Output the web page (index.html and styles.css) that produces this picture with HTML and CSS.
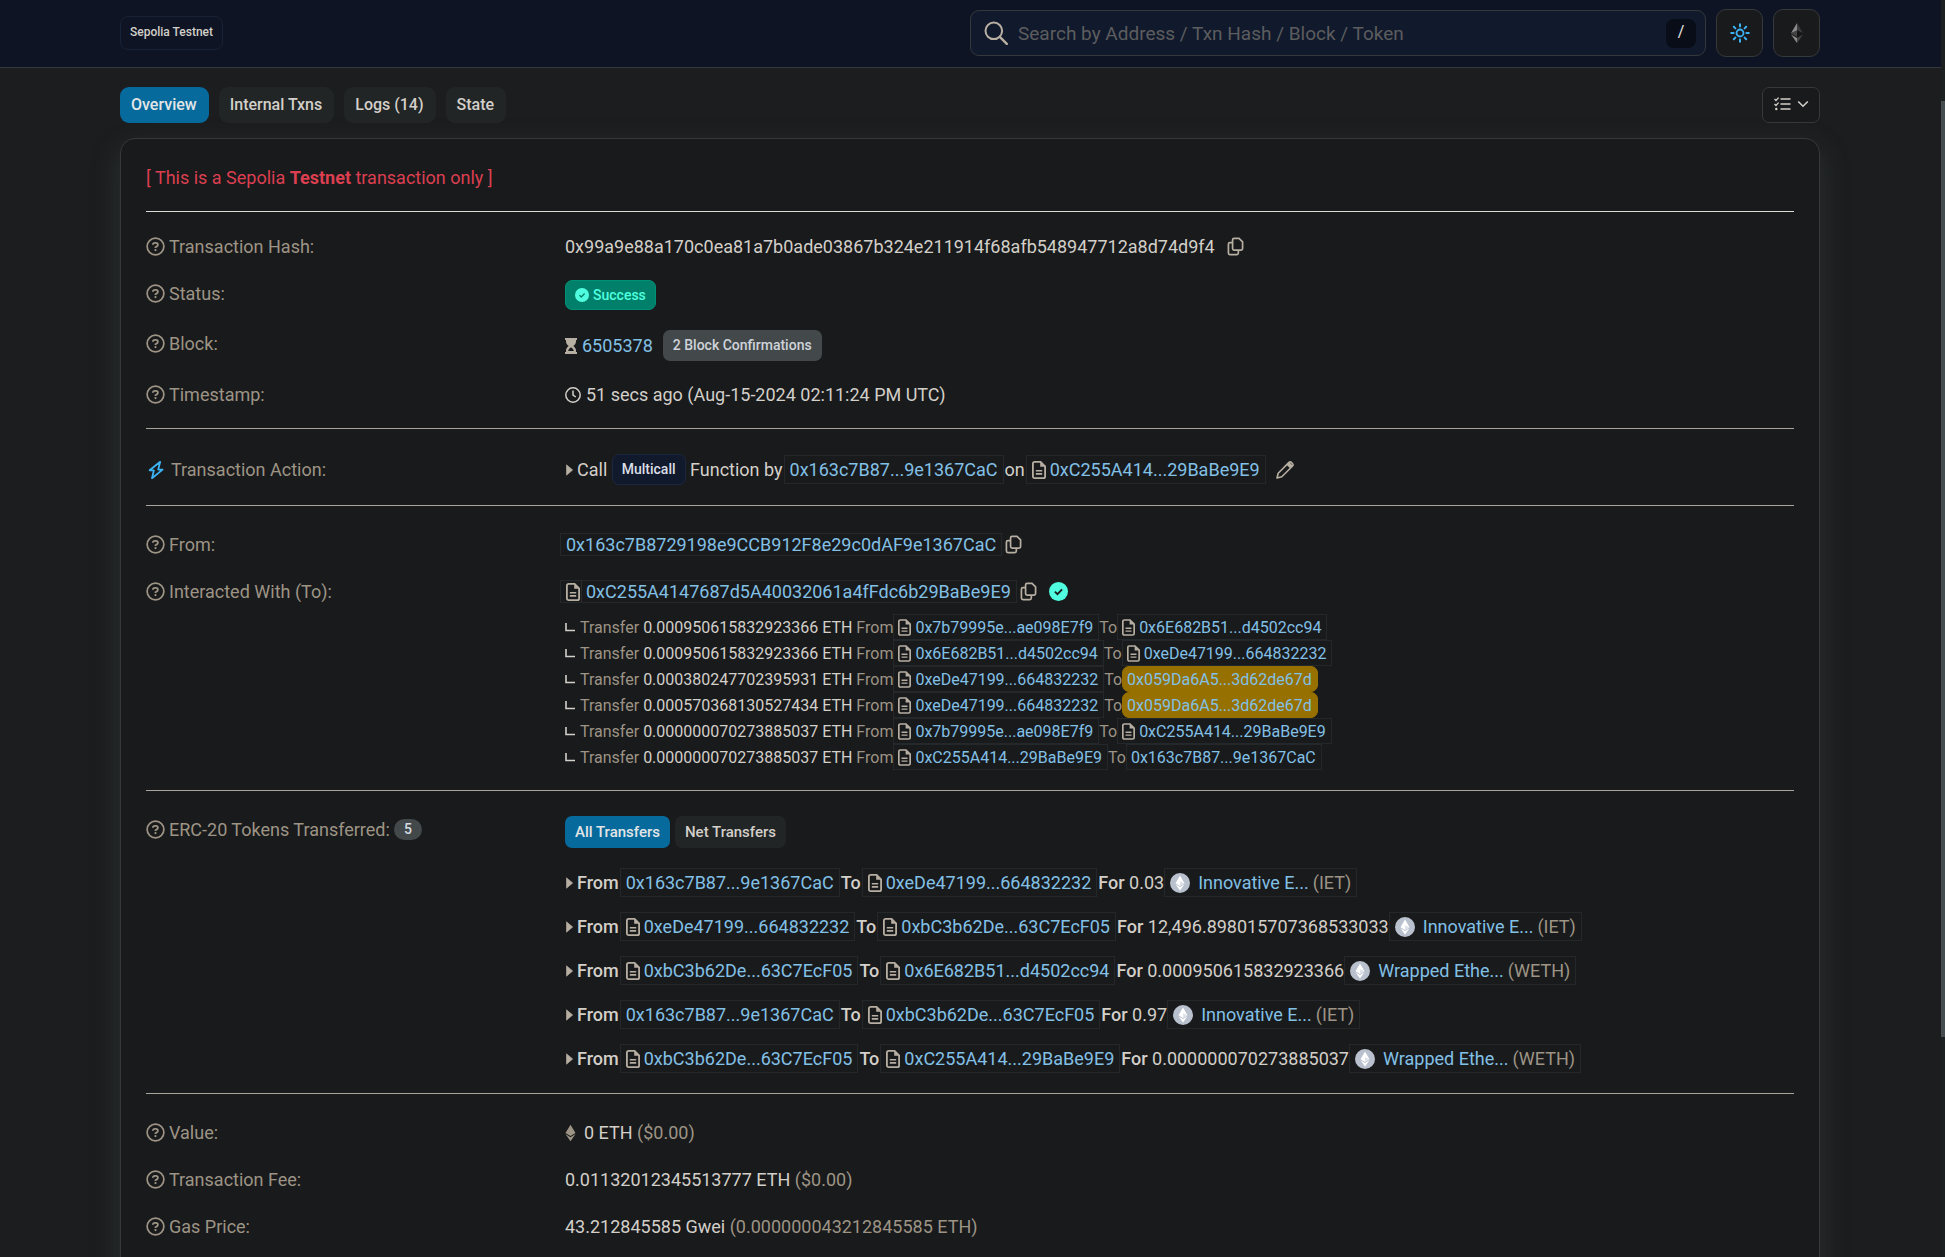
FILE: index.html
```
<!DOCTYPE html>
<html lang="en">
<head>
  <meta charset="UTF-8" />
  <meta name="viewport" content="width=device-width, initial-scale=1.0"/>
  <title>Sepolia Transaction Hash: 0x99a9e88a17...</title>
  <link rel="stylesheet" href="styles.css">
</head>
<body>
  <svg class="sprite" aria-hidden="true">
    <symbol id="i-help" viewBox="0 0 20 20"><circle cx="10" cy="10" r="8.8" fill="none" stroke="currentColor" stroke-width="1.8"/><path d="M7.2 8.2c.1-1.300 1-2 2.300-2h.8c1.300 0 2.200.8 2.200 1.900 0 .9-.5 1.400-1.200 1.800l-1.300.8v.8" fill="none" stroke="currentColor" stroke-width="1.900"/><circle cx="10" cy="13.800" r="1.200" fill="currentColor"/></symbol>
    <symbol id="i-copy" viewBox="0 0 18 20"><path d="M7.500 1.500h5.200L16.500 5v7.200a1.600 1.600 0 0 1-1.600 1.600H7.500a1.600 1.600 0 0 1-1.600-1.600V3.100a1.600 1.600 0 0 1 1.600-1.600zM5.900 6H3.100a1.600 1.600 0 0 0-1.600 1.600v9.300a1.600 1.600 0 0 0 1.600 1.600h7.300a1.600 1.600 0 0 0 1.600-1.600v-3.100" fill="none" stroke="currentColor" stroke-width="1.800"/></symbol>
    <symbol id="i-file" viewBox="0 0 14 18"><path d="M2.600.9h6l4.500 4.500v10a1.700 1.700 0 0 1-1.700 1.700H2.600A1.700 1.700 0 0 1 .9 15.400V2.600A1.700 1.700 0 0 1 2.600.9z" fill="none" stroke="currentColor" stroke-width="1.800"/><path d="M8.200.9v4.900h4.900z" fill="currentColor"/><path d="M3.800 9.800h6.400M3.800 12.900h6.400" stroke="currentColor" stroke-width="1.600"/></symbol>
    <symbol id="i-check" viewBox="0 0 18 18"><circle cx="9" cy="9" r="9" fill="currentColor"/><path d="M5.600 9.200l2.400 2.400 4.400-4.500" fill="none" stroke="var(--tick)" stroke-width="1.700"/></symbol>
    <symbol id="i-hourglass" viewBox="0 0 12 16"><path d="M0 0h12v2h-1v1.500C11 5.500 9.500 7 8.300 8c1.200 1 2.700 2.500 2.700 4.500V14h1v2H0v-2h1v-1.500C1 10.500 2.500 9 3.700 8 2.500 7 1 5.500 1 3.500V2H0zM6 9.200c-1.200.9-2.500 2-2.800 3.800h5.600C8.500 11.200 7.200 10.100 6 9.200z" fill="currentColor" fill-rule="evenodd"/></symbol>
    <symbol id="i-clock" viewBox="0 0 16 16"><circle cx="8" cy="8" r="7.200" fill="none" stroke="currentColor" stroke-width="1.500"/><path d="M8 3.600V8l2.800 2" fill="none" stroke="currentColor" stroke-width="1.500"/></symbol>
    <symbol id="i-bolt" viewBox="0 0 16 20"><path d="M12.200 1.800L1.600 10.300h4.300L4 18.200 14.600 9.600h-4.400z" fill="none" stroke="currentColor" stroke-width="1.800" stroke-linejoin="round"/></symbol>
    <symbol id="i-caret" viewBox="0 0 7 12"><path d="M.5.800v10.400L6.700 6z" fill="currentColor" stroke="currentColor" stroke-width=".6"/></symbol>
    <symbol id="i-pencil" viewBox="0 0 20 20"><path d="M2 18l1.200-4.800L14 2.400a1.600 1.600 0 0 1 2.300 0l1.300 1.300a1.600 1.600 0 0 1 0 2.300L6.800 16.800z" fill="none" stroke="currentColor" stroke-width="1.600" stroke-linejoin="round"/><path d="M11.500 4.800L15 8.300l2.800-2.600-3.500-3.600z" fill="currentColor"/></symbol>
    <symbol id="i-search" viewBox="0 0 24 24"><circle cx="9.800" cy="9.800" r="8.300" fill="none" stroke="currentColor" stroke-width="2"/><path d="M15.800 15.800l7 7" stroke="currentColor" stroke-width="2.400" stroke-linecap="round"/></symbol>
    <symbol id="i-sun" viewBox="0 0 20 20"><circle cx="10" cy="10" r="3.500" fill="none" stroke="currentColor" stroke-width="1.800"/><path d="M10 1.200v2.400M10 16.400v2.400M1.200 10h2.400M16.400 10h2.400M3.800 3.800l1.600 1.600M14.600 14.600l1.600 1.600M16.200 3.800l-1.600 1.600M5.400 14.600l-1.600 1.600" stroke="currentColor" stroke-width="2" stroke-linecap="round"/></symbol>
    <symbol id="i-eth-color" viewBox="0 0 12 20"><path d="M6 0L0 10.300 6 7.600z" fill="#8a8a8a"/><path d="M6 0l6 10.300-6-2.700z" fill="#3b3b3b"/><path d="M0 10.300l6-2.700v6.200z" fill="#454545"/><path d="M12 10.300L6 7.600v6.200z" fill="#161616"/><path d="M0 11.600l6 3.500V20z" fill="#8a8a8a"/><path d="M12 11.600l-6 3.500V20z" fill="#444"/></symbol>
    <symbol id="i-eth" viewBox="0 0 12 18"><path d="M6 0l5.500 9L6 12.200.5 9zM.5 10.200L6 13.500l5.500-3.300L6 18z" fill="currentColor"/></symbol>
    <symbol id="i-token" viewBox="0 0 20 20"><circle cx="10" cy="10" r="10" fill="#b9c0ce"/><path d="M10 2.500l4.500 7.700-4.500 2.700-4.500-2.700zM5.500 11.200l4.500 2.700 4.500-2.700-4.500 6.300z" fill="#fff"/><path d="M10 8.200l4.500 2-4.500 2.700z" fill="#dfe3ea"/></symbol>
    <symbol id="i-list" viewBox="0 0 17 14"><path d="M6.500 2H16.500M6.500 7H16.500M6.500 12H16.500" stroke="currentColor" stroke-width="1.600"/><path d="M.5 2l1.500 1.500L4.600.6M.5 7l1.500 1.500L4.600 5.600" fill="none" stroke="currentColor" stroke-width="1.300"/><circle cx="2.300" cy="12" r="1.200" fill="currentColor"/></symbol>
    <symbol id="i-chevron" viewBox="0 0 12 8"><path d="M1.200 1.500L6 6.200l4.800-4.700" fill="none" stroke="currentColor" stroke-width="1.600"/></symbol>
    <symbol id="i-corner" viewBox="0 0 10 10"><path d="M1 1v7.500h9" fill="none" stroke="currentColor" stroke-width="1.600"/></symbol>
  </svg>

  <header class="header">
    <div class="container header-inner">
      <span class="network">Sepolia Testnet</span>
      <div class="header-tools">
        <form class="search">
          <svg class="icon search-icon"><use href="#i-search"/></svg>
          <input type="text" aria-label="Search" placeholder="Search by Address / Txn Hash / Block / Token">
          <kbd>/</kbd>
        </form>
        <button class="square blue" aria-label="Theme"><svg class="icon help"><use href="#i-sun"/></svg></button>
        <button class="square" aria-label="Networks"><svg class="icon eth-logo"><use href="#i-eth-color"/></svg></button>
      </div>
    </div>
  </header>

  <main class="container">
    <nav class="tabs">
      <button class="tab active">Overview</button>
      <button class="tab">Internal Txns</button>
      <button class="tab">Logs (14)</button>
      <button class="tab">State</button>
      <button class="options" aria-label="Options"><svg class="icon list"><use href="#i-list"/></svg><svg class="icon chevron"><use href="#i-chevron"/></svg></button>
    </nav>

    <div class="card">
      <p class="warning">[ This is a Sepolia <b>Testnet</b> transaction only ]</p>

      <section class="section first">
        <div class="row">
          <div class="label"><svg class="icon help"><use href="#i-help"/></svg>Transaction Hash:</div>
          <div class="value">0x99a9e88a170c0ea81a7b0ade03867b324e211914f68afb548947712a8d74d9f4 <button class="plain wide" aria-label="Copy hash"><svg class="icon copy"><use href="#i-copy"/></svg></button></div>
        </div>
        <div class="row">
          <div class="label"><svg class="icon help"><use href="#i-help"/></svg>Status:</div>
          <div class="value"><span class="badge success"><svg class="icon check-sm"><use href="#i-check"/></svg>Success</span></div>
        </div>
        <div class="row">
          <div class="label"><svg class="icon help"><use href="#i-help"/></svg>Block:</div>
          <div class="value"><svg class="icon hourglass"><use href="#i-hourglass"/></svg><a href="#">6505378</a><span class="badge confirmations">2 Block Confirmations</span></div>
        </div>
        <div class="row">
          <div class="label"><svg class="icon help"><use href="#i-help"/></svg>Timestamp:</div>
          <div class="value"><svg class="icon clock"><use href="#i-clock"/></svg>51 secs ago (Aug-15-2024 02:11:24 PM UTC)</div>
        </div>
      </section>

      <section class="section">
        <div class="row middle">
          <div class="label action"><svg class="icon bolt"><use href="#i-bolt"/></svg>Transaction Action:</div>
          <div class="value"><svg class="icon caret"><use href="#i-caret"/></svg>Call <span class="badge method">Multicall</span> Function by<span class="addr"><a href="#">0x163c7B87...9e1367CaC</a></span>on<span class="addr"><svg class="icon file"><use href="#i-file"/></svg><a href="#">0xC255A414...29BaBe9E9</a></span><button class="plain wide" aria-label="Edit note"><svg class="icon help"><use href="#i-pencil"/></svg></button></div>
        </div>
      </section>

      <section class="section">
        <div class="row">
          <div class="label"><svg class="icon help"><use href="#i-help"/></svg>From:</div>
          <div class="value"><span class="addr full"><a href="#">0x163c7B8729198e9CCB912F8e29c0dAF9e1367CaC</a></span><button class="plain" aria-label="Copy address"><svg class="icon copy"><use href="#i-copy"/></svg></button></div>
        </div>
        <div class="row">
          <div class="label"><svg class="icon help"><use href="#i-help"/></svg>Interacted With (To):</div>
          <div>
            <div class="value"><span class="addr full"><svg class="icon file"><use href="#i-file"/></svg><a href="#">0xC255A4147687d5A40032061a4fFdc6b29BaBe9E9</a></span><button class="plain" aria-label="Copy address"><svg class="icon copy"><use href="#i-copy"/></svg></button><svg class="icon verified"><use href="#i-check"/></svg></div>
            <ul class="internal">
              <li><svg class="icon corner"><use href="#i-corner"/></svg>Transfer <span class="amount">0.000950615832923366 ETH</span> From<span class="addr"><svg class="icon file"><use href="#i-file"/></svg><a href="#">0x7b79995e...ae098E7f9</a></span>To<span class="addr"><svg class="icon file"><use href="#i-file"/></svg><a href="#">0x6E682B51...d4502cc94</a></span></li>
              <li><svg class="icon corner"><use href="#i-corner"/></svg>Transfer <span class="amount">0.000950615832923366 ETH</span> From<span class="addr"><svg class="icon file"><use href="#i-file"/></svg><a href="#">0x6E682B51...d4502cc94</a></span>To<span class="addr"><svg class="icon file"><use href="#i-file"/></svg><a href="#">0xeDe47199...664832232</a></span></li>
              <li><svg class="icon corner"><use href="#i-corner"/></svg>Transfer <span class="amount">0.000380247702395931 ETH</span> From<span class="addr"><svg class="icon file"><use href="#i-file"/></svg><a href="#">0xeDe47199...664832232</a></span>To<span class="addr marked"><a href="#">0x059Da6A5...3d62de67d</a></span></li>
              <li><svg class="icon corner"><use href="#i-corner"/></svg>Transfer <span class="amount">0.000570368130527434 ETH</span> From<span class="addr"><svg class="icon file"><use href="#i-file"/></svg><a href="#">0xeDe47199...664832232</a></span>To<span class="addr marked"><a href="#">0x059Da6A5...3d62de67d</a></span></li>
              <li><svg class="icon corner"><use href="#i-corner"/></svg>Transfer <span class="amount">0.000000070273885037 ETH</span> From<span class="addr"><svg class="icon file"><use href="#i-file"/></svg><a href="#">0x7b79995e...ae098E7f9</a></span>To<span class="addr"><svg class="icon file"><use href="#i-file"/></svg><a href="#">0xC255A414...29BaBe9E9</a></span></li>
              <li><svg class="icon corner"><use href="#i-corner"/></svg>Transfer <span class="amount">0.000000070273885037 ETH</span> From<span class="addr"><svg class="icon file"><use href="#i-file"/></svg><a href="#">0xC255A414...29BaBe9E9</a></span>To<span class="addr"><a href="#">0x163c7B87...9e1367CaC</a></span></li>
            </ul>
          </div>
        </div>
      </section>

      <section class="section">
        <div class="row">
          <div class="label"><svg class="icon help"><use href="#i-help"/></svg>ERC-20 Tokens Transferred: <span class="count">5</span></div>
          <div>
            <div class="pills">
              <button class="pill active">All Transfers</button>
              <button class="pill">Net Transfers</button>
            </div>
            <ul class="tokens">
              <li><svg class="icon caret"><use href="#i-caret"/></svg><b>From</b><span class="addr"><a href="#">0x163c7B87...9e1367CaC</a></span><b>To</b><span class="addr"><svg class="icon file"><use href="#i-file"/></svg><a href="#">0xeDe47199...664832232</a></span><b>For</b>&nbsp;0.03<span class="addr token"><svg class="icon coin"><use href="#i-token"/></svg><a href="#">Innovative E...</a><span class="muted">(IET)</span></span></li>
              <li><svg class="icon caret"><use href="#i-caret"/></svg><b>From</b><span class="addr"><svg class="icon file"><use href="#i-file"/></svg><a href="#">0xeDe47199...664832232</a></span><b>To</b><span class="addr"><svg class="icon file"><use href="#i-file"/></svg><a href="#">0xbC3b62De...63C7EcF05</a></span><b>For</b>&nbsp;12,496.898015707368533033<span class="addr token"><svg class="icon coin"><use href="#i-token"/></svg><a href="#">Innovative E...</a><span class="muted">(IET)</span></span></li>
              <li><svg class="icon caret"><use href="#i-caret"/></svg><b>From</b><span class="addr"><svg class="icon file"><use href="#i-file"/></svg><a href="#">0xbC3b62De...63C7EcF05</a></span><b>To</b><span class="addr"><svg class="icon file"><use href="#i-file"/></svg><a href="#">0x6E682B51...d4502cc94</a></span><b>For</b>&nbsp;0.000950615832923366<span class="addr token"><svg class="icon coin"><use href="#i-token"/></svg><a href="#">Wrapped Ethe...</a><span class="muted">(WETH)</span></span></li>
              <li><svg class="icon caret"><use href="#i-caret"/></svg><b>From</b><span class="addr"><a href="#">0x163c7B87...9e1367CaC</a></span><b>To</b><span class="addr"><svg class="icon file"><use href="#i-file"/></svg><a href="#">0xbC3b62De...63C7EcF05</a></span><b>For</b>&nbsp;0.97<span class="addr token"><svg class="icon coin"><use href="#i-token"/></svg><a href="#">Innovative E...</a><span class="muted">(IET)</span></span></li>
              <li><svg class="icon caret"><use href="#i-caret"/></svg><b>From</b><span class="addr"><svg class="icon file"><use href="#i-file"/></svg><a href="#">0xbC3b62De...63C7EcF05</a></span><b>To</b><span class="addr"><svg class="icon file"><use href="#i-file"/></svg><a href="#">0xC255A414...29BaBe9E9</a></span><b>For</b>&nbsp;0.000000070273885037<span class="addr token"><svg class="icon coin"><use href="#i-token"/></svg><a href="#">Wrapped Ethe...</a><span class="muted">(WETH)</span></span></li>
            </ul>
          </div>
        </div>
      </section>

      <section class="section">
        <div class="row">
          <div class="label"><svg class="icon help"><use href="#i-help"/></svg>Value:</div>
          <div class="value"><svg class="icon eth"><use href="#i-eth"/></svg>0 ETH&nbsp;<span class="muted">($0.00)</span></div>
        </div>
        <div class="row">
          <div class="label"><svg class="icon help"><use href="#i-help"/></svg>Transaction Fee:</div>
          <div class="value">0.01132012345513777 ETH&nbsp;<span class="muted">($0.00)</span></div>
        </div>
        <div class="row">
          <div class="label"><svg class="icon help"><use href="#i-help"/></svg>Gas Price:</div>
          <div class="value">43.212845585 Gwei&nbsp;<span class="muted">(0.000000043212845585 ETH)</span></div>
        </div>
      </section>
    </div>
  </main>
  <div class="scrollbar"></div>
</body>
</html>
```
FILE: styles.css
```
:root {
  --page-bg: #1b1d1e;
  --card-bg: #191a1c;
  --text: #d3cfc9;
  --muted: #9d9485;
  --icon: #b8afa3;
  --link: #82c0e6;
  --blue: #066a9c;
  --line: #a9a59b;
  --border: #35393b;
  --tick: #191a1c;
}

* {
  box-sizing: border-box;
}

body {
  margin: 0;
  padding-right: 5px;
  height: 100vh;
  overflow: hidden;
  background: var(--page-bg);
  color: var(--text);
  font-family: Roboto, sans-serif;
  font-size: 18px;
  line-height: 27px;
}

button, input, kbd {
  font-family: inherit;
}

button {
  padding: 0;
  border: none;
  background: none;
  color: var(--text);
  cursor: pointer;
}

a {
  color: var(--link);
  text-decoration: none;
}

b {
  font-weight: 500;
}

ul {
  margin: 0;
  padding: 0;
  list-style: none;
}

.sprite {
  display: none;
}

.container {
  width: 88%;
  max-width: 1700px;
  margin: 0 auto;
}

.muted {
  color: var(--muted);
}

/* header */
.header {
  margin-right: -5px;
  padding-right: 5px;
  background: #0e1424;
  border-bottom: 1px solid var(--border);
}

.header-inner {
  display: flex;
  align-items: center;
  justify-content: space-between;
  height: 67px;
  padding-bottom: 1px;
}

.network {
  padding: 6px 9px 7px;
  border: 1px solid #182236;
  border-radius: 8px;
  font-size: 12px;
  font-weight: 500;
  line-height: 19px;
}

.header-tools {
  display: flex;
  align-items: center;
  gap: 10px;
  width: 50%;
}

.search {
  flex: 1;
  display: flex;
  align-items: center;
  gap: 10px;
  height: 46px;
  padding: 0 9px 0 13px;
  background: #11192c;
  border: 1px solid var(--border);
  border-radius: 9px;
}

.search input {
  flex: 1;
  min-width: 0;
  padding: 0;
  border: none;
  outline: none;
  background: none;
  color: var(--text);
  font-size: 19px;
}

.search input::placeholder {
  color: #5c5d5f;
  opacity: 1;
}

.search kbd {
  width: 30px;
  height: 29px;
  border-radius: 8px;
  background: #090d18;
  color: #e8e6e3;
  font-size: 16px;
  line-height: 25px;
  text-align: center;
}

.square {
  display: flex;
  align-items: center;
  justify-content: center;
  width: 47px;
  height: 48px;
  border: 1px solid var(--border);
  border-radius: 10px;
  background: var(--card-bg);
}

/* tabs */
.tabs {
  display: flex;
  gap: 10px;
  padding: 19px 0 15px;
}

.tab {
  height: 36px;
  padding: 0 12px 2px 11px;
  border-radius: 9px;
  background: #212526;
  font-size: 16px;
  font-weight: 500;
}

.tab.active, .pill.active {
  background: var(--blue);
  color: #e3e6e8;
}

.options {
  display: flex;
  align-items: center;
  justify-content: center;
  gap: 6px;
  width: 58px;
  height: 36px;
  margin-left: auto;
  padding-bottom: 2px;
  border: 1px solid var(--border);
  border-radius: 7px;
  background: var(--card-bg);
}

/* card */
.card {
  padding: 25px 25px 60px;
  background: var(--card-bg);
  border: 1px solid var(--border);
  border-radius: 15px;
  box-shadow: 0 10px 28px rgba(82, 90, 94, 0.36);
}

.warning {
  margin: 0;
  padding-bottom: 20px;
  color: #dc3f50;
}

.warning b {
  font-weight: 700;
}

.section {
  display: flex;
  flex-direction: column;
  gap: 20px;
  padding: 25px 0 20px;
  border-top: 1px solid var(--line);
}

.section.first {
  padding-top: 21px;
  border-top-color: #dedbd7;
}

.row {
  display: grid;
  grid-template-columns: 25% 1fr;
  column-gap: 7px;
}

.row.middle {
  align-items: center;
}

.label {
  display: flex;
  align-items: center;
  align-self: start;
  gap: 4px;
  color: var(--muted);
}

.middle .label {
  align-self: center;
}

.label.action {
  gap: 7px;
  padding-left: 2px;
}

.value, .tokens li, .internal li {
  display: flex;
  align-items: center;
  white-space: pre;
}

.value {
  min-height: 27px;
}

.plain {
  display: flex;
}

.plain.wide {
  padding: 0 8px;
}

/* badges */
.badge {
  display: flex;
  align-items: center;
  height: 31px;
  padding: 0 9px;
  border: 1px solid transparent;
  border-radius: 7px;
  font-size: 14px;
  font-weight: 500;
}

.success {
  --tick: #00806a;
  height: 30px;
  gap: 4px;
  background: #00806a;
  border-color: #009076;
  color: #4fffdf;
}

.confirmations {
  margin-left: 10px;
  background: #43494b;
  color: #cfd3da;
}

.method {
  background: #11192c;
  border-color: #1b2741;
  color: #dcdfe6;
}

.count {
  padding: 0 10px;
  border-radius: 11px;
  background: #43494b;
  color: #d6dae2;
  font-size: 14px;
  font-weight: 500;
  line-height: 21px;
}

/* addresses */
.addr {
  display: flex;
  align-items: center;
  gap: 4px;
  height: 29px;
  margin: 0 1px;
  padding: 0 5px;
  border: 1px solid #25282a;
}

.addr.full {
  height: 23px;
  margin: 0 3px 0 -5px;
}

/* the contract link has its own frame inside the outer one */
.addr.full .file {
  margin-right: -3px;
}

.addr.full .file + a {
  padding-left: 4px;
  border-left: 1px solid #2b2c2a;
  line-height: 21px;
}

.internal {
  margin-top: 9px;
  color: var(--muted);
  font-size: 16px;
}

.internal li {
  height: 26px;
}

.internal .addr {
  height: 26px;
  margin: 0;
  padding: 0 5px 0 4px;
}

.internal .amount {
  color: var(--text);
}

.internal .marked {
  background: #967000;
  border-color: #967000;
  border-radius: 7px;
}

.pills {
  display: flex;
  gap: 5px;
  margin-bottom: 20px;
}

.pill {
  height: 32px;
  padding: 0 10px;
  border-radius: 7px;
  background: #212526;
  font-size: 15px;
  font-weight: 500;
}

.tokens {
  display: flex;
  flex-direction: column;
  gap: 15px;
}

.tokens .token {
  margin: 0;
}

.token .coin {
  margin-right: 4px;
}

/* icons */
.icon {
  flex: none;
  color: var(--icon);
}

.help { width: 20px; height: 20px; }
.label .help { width: 19px; height: 19px; color: var(--muted); }
.blue .icon { color: #3db3f5; }
.search-icon { width: 24px; height: 24px; }
.eth-logo { width: 12px; height: 20px; }
.list { width: 17px; height: 14px; color: var(--text); }
.chevron { width: 12px; height: 8px; color: var(--text); }
.copy { width: 17px; height: 19px; }
.file { width: 14px; height: 18px; }
.internal .file { width: 13px; height: 17px; }
.check-sm { width: 14px; height: 14px; color: #4fffdf; }
.verified { width: 19px; height: 19px; margin-left: 12px; color: #4fffdf; }
.hourglass { width: 12px; height: 16px; margin-right: 5px; }
.clock { width: 16px; height: 16px; margin-right: 5px; color: var(--text); }
.label .bolt { width: 16px; height: 20px; color: #3db3f5; }
.caret { width: 7px; height: 12px; margin: 0 4px 0 1px; }
.eth { width: 11px; height: 18px; margin-right: 8px; color: var(--muted); }
.coin { width: 20px; height: 20px; }
.corner { width: 10px; height: 10px; margin-right: 5px; color: var(--text); }

.scrollbar {
  position: fixed;
  top: 0;
  right: 0;
  width: 4px;
  height: 100vh;
  background: linear-gradient(#1d2021 8%, #464d50 8%, #464d50 82.5%, #1d2021 82.5%);
}
```
